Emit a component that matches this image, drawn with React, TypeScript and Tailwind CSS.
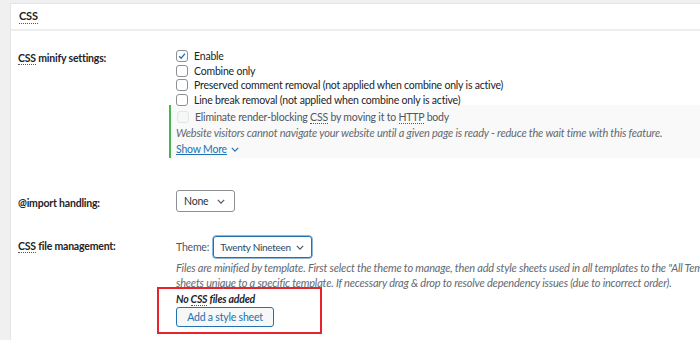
import React from "react";

const font = { fontFamily: 'Lato, "Liberation Sans", sans-serif' };

function Check({ checked = false, disabled = false }: { checked?: boolean; disabled?: boolean }) {
  return (
    <span
      className={
        "w-[12px] h-[12px] rounded-[3px] border flex items-center justify-center shrink-0 " +
        (disabled ? "border-[#e2e4e7] bg-[#f6f7f7]" : "border-[#8c8f94] bg-white")
      }
    >
      {checked && (
        <svg viewBox="0 0 12 12" className="w-[10px] h-[10px]">
          <path d="M2.5 6.2 L5 8.6 L9.6 3.2" fill="none" stroke="#2271b1" strokeWidth="1.6" />
        </svg>
      )}
    </span>
  );
}

function Chevron({ color = "#50575e" }: { color?: string }) {
  return (
    <svg viewBox="0 0 10 6" className="w-[8px] h-[5px] shrink-0">
      <path d="M1 1 L5 5 L9 1" fill="none" stroke={color} strokeWidth="1.5" />
    </svg>
  );
}

function Abbr({ children }: { children: React.ReactNode }) {
  return <span className="border-b border-dotted border-[#50575e]">{children}</span>;
}

export default function App() {
  return (
    <div
      className="w-[700px] h-[340px] bg-[#f0f0f1] pt-[3px] pl-[10px] overflow-hidden text-[10.5px] tracking-[-0.2px] leading-[14px] text-[#1d2327]"
      style={font}
    >
      <div className="bg-white h-full border-l border-t border-[#e5e5e5] overflow-hidden">
        <div className="h-[27px] flex items-center pl-[8px] border-b-2 border-[#eeeeee] font-bold text-[11px]">
          <Abbr>CSS</Abbr>
        </div>

        <div className="flex pt-[18px]">
          <div className="w-[158px] shrink-0 pl-[7px] pt-[2px] font-bold">
            <Abbr>CSS</Abbr> minify settings:
          </div>
          <div className="flex-1 min-w-0">
            <div className="pl-[7px] flex flex-col gap-[0.7px]">
              <label className="flex items-center gap-[6px] h-[14px]"><Check checked />Enable</label>
              <label className="flex items-center gap-[6px] h-[14px]"><Check />Combine only</label>
              <label className="flex items-center gap-[6px] h-[14px]"><Check />Preserved comment removal (not applied when combine only is active)</label>
              <label className="flex items-center gap-[6px] h-[14px]"><Check />Line break removal (not applied when combine only is active)</label>
            </div>
            <div className="-mt-[2px] border-l-2 border-[#46b450] bg-[#f9f9f9] pl-[6px] pt-[4px] pb-[1px]">
              <label className="flex items-center gap-[6px] h-[16px] text-[#50575e]">
                <Check disabled />
                <span>Eliminate render-blocking <Abbr>CSS</Abbr> by moving it to <Abbr>HTTP</Abbr> body</span>
              </label>
              <div className="italic text-[#646970] text-[11px] h-[16px] leading-[16px] -ml-[1px] whitespace-nowrap">
                Website visitors cannot navigate your website until a given page is ready - reduce the wait time with this feature.
              </div>
              <a className="text-[#2271b1] underline flex items-center gap-[4px] -ml-[1px] h-[16px]">
                Show More <Chevron color="#2271b1" />
              </a>
            </div>
          </div>
        </div>

        <div className="flex pt-[32px]">
          <div className="w-[158px] shrink-0 pl-[7px] pt-[6px] font-bold">@import handling:</div>
          <div className="pl-[7px]">
            <div className="w-[59px] h-[22px] border border-[#8c8f94] rounded-[3px] flex items-center justify-between pl-[7px] pr-[9px] text-[#2c3338]">
              <span>None</span>
              <Chevron />
            </div>
          </div>
        </div>

        <div className="flex pt-[24px]">
          <div className="w-[158px] shrink-0 pl-[7px] pt-[3px] font-bold">
            <Abbr>CSS</Abbr> file management:
          </div>
          <div className="flex-1 min-w-0 pl-[7px]">
            <div className="flex items-center gap-[4px] text-[#50575e]">
              <span>Theme:</span>
              <div className="w-[99px] h-[22px] border border-[#2271b1] shadow-[0_0_0_0.5px_#2271b1] rounded-[3px] flex items-center justify-between pl-[6px] pr-[7px] text-[10px] tracking-[-0.3px] text-[#2a4a6b] whitespace-nowrap">
                <span>Twenty Nineteen</span>
                <Chevron />
              </div>
            </div>
            <div className="italic text-[#646970] text-[11px] leading-[15px] mt-[2px] whitespace-nowrap">
              Files are minified by template. First select the theme to manage, then add style sheets used in all templates to the "All Templates" group. Add style
              <br />
              sheets unique to a specific template. If necessary drag &amp; drop to resolve dependency issues (due to incorrect order).
            </div>
            <div className="-ml-[19px] -mt-[3px] w-[165px] h-[47px] border-2 border-[#e8232c] pt-[3px]">
              <div className="ml-[17px] grid justify-items-start gap-[1px]">
                <span className="font-bold italic leading-[14px] text-[10.5px]">
                  No <Abbr>CSS</Abbr> files added
                </span>
                <button className="h-[20px] w-[98px] border border-[#2271b1] rounded-[3px] bg-[#f6f7f7] text-[#2271b1]">
                  Add a style sheet
                </button>
              </div>
            </div>
          </div>
        </div>
      </div>
    </div>
  );
}
